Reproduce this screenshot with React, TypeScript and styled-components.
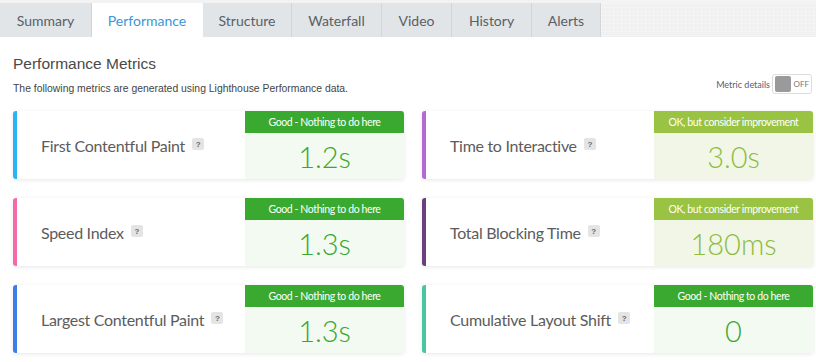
import React from "react";
import styled, { createGlobalStyle } from "styled-components";

const GlobalStyle = createGlobalStyle`
  html, body {
    margin: 0;
    padding: 0;
    background: #ffffff;
  }
  body {
    font-family: Lato, "Open Sans", Arial, sans-serif;
    width: 816px;
    height: 362px;
    overflow: hidden;
  }
`;

const Page = styled.div`
  width: 816px;
  height: 362px;
  background: #ffffff;
`;

const TabBar = styled.nav`
  display: flex;
  height: 37px;
  padding-top: 3px;
  box-sizing: border-box;
  background: #f3f3f3;
`;

const Tab = styled.div<{ $active?: boolean; $w: number }>`
  width: ${({ $w }) => $w}px;
  display: flex;
  align-items: center;
  justify-content: center;
  font-family: Lato, sans-serif;
  font-size: 14px;
  color: ${({ $active }) => ($active ? "#3b97d6" : "#5a5f64")};
  background: ${({ $active }) => ($active ? "#ffffff" : "#e1e5e8")};
  border-right: 1px solid ${({ $active }) => ($active ? "#ffffff" : "#d2d6d9")};
  box-sizing: border-box;
  &:last-of-type {
    border-right: none;
  }
`;

const TabFill = styled.div`
  flex: 1;
  background: #f0f0f0;
  background-image: linear-gradient(#f4f4f4 1px, transparent 1px),
    linear-gradient(90deg, #f4f4f4 1px, transparent 1px);
  background-size: 4px 4px;
`;

const Section = styled.section`
  padding: 18px 3px 0 13px;
`;

const HeaderRow = styled.div`
  display: flex;
  justify-content: space-between;
  align-items: flex-end;
`;

const Title = styled.h2`
  margin: 0;
  font-family: "Liberation Sans", Arial, sans-serif;
  font-weight: normal;
  font-size: 15.5px;
  color: #4a4a4a;
`;

const Sub = styled.p`
  margin: 10px 0 0;
  font-family: "Liberation Sans", Arial, sans-serif;
  font-size: 10.4px;
  color: #444;
`;

const Toggle = styled.div`
  display: flex;
  align-items: center;
  gap: 2px;
  margin-right: 1px;
  font-family: Lato, sans-serif;
  font-size: 9px;
  color: #55607a;
`;

const Switch = styled.div`
  display: flex;
  align-items: center;
  gap: 3px;
  width: 40px;
  height: 20px;
  padding: 2px;
  box-sizing: border-box;
  border: 1px solid #dcdcdc;
  border-radius: 3px;
  color: #777;
  font-size: 8px;
`;

const Knob = styled.span`
  width: 16px;
  height: 16px;
  border-radius: 2px;
  background: #9a9a9a;
`;

const Grid = styled.div`
  display: grid;
  grid-template-columns: 391px 391px;
  column-gap: 18px;
  row-gap: 19px;
  margin-top: 17px;
`;

const Card = styled.div<{ $accent: string }>`
  display: flex;
  height: 68px;
  border-radius: 3px;
  border-left: 4px solid ${({ $accent }) => $accent};
  background: #fff;
  box-shadow: 0 1px 4px rgba(0, 0, 0, 0.1);
  overflow: hidden;
`;

const Label = styled.div`
  flex: 1;
  display: flex;
  align-items: center;
  padding-left: 24px;
  font-family: Lato, sans-serif;
  font-size: 16px;
  letter-spacing: -0.3px;
  color: #5c5c5c;
`;

const Help = styled.span`
  display: inline-flex;
  align-items: center;
  justify-content: center;
  width: 12px;
  height: 12px;
  margin-left: 7px;
  margin-top: -2px;
  border-radius: 2px;
  background: #e4e4e4;
  color: #666;
  font-family: "Liberation Sans", Arial, sans-serif;
  font-weight: bold;
  font-size: 8px;
`;

const Status = styled.div<{ $tone: "good" | "ok" }>`
  width: 159px;
  display: flex;
  flex-direction: column;
  background: ${({ $tone }) => ($tone === "good" ? "#f3faf1" : "#f1f6e7")};
`;

const StatusHead = styled.div<{ $tone: "good" | "ok" }>`
  height: 22px;
  display: flex;
  align-items: center;
  justify-content: center;
  background: ${({ $tone }) => ($tone === "good" ? "#39aa2f" : "#9ac343")};
  color: #fff;
  font-family: Lato, sans-serif;
  font-size: 10.5px;
  letter-spacing: -0.4px;
`;

const Value = styled.div<{ $tone: "good" | "ok" }>`
  flex: 1;
  display: flex;
  align-items: center;
  justify-content: center;
  font-family: Lato, sans-serif;
  font-weight: 300;
  font-size: 29px;
  color: ${({ $tone }) => ($tone === "good" ? "#38a82e" : "#8dbd3f")};
`;

type Metric = {
  name: string;
  accent: string;
  tone: "good" | "ok";
  value: string;
};

const metrics: Metric[] = [
  { name: "First Contentful Paint", accent: "#2ab4f2", tone: "good", value: "1.2s" },
  { name: "Time to Interactive", accent: "#b36ad2", tone: "ok", value: "3.0s" },
  { name: "Speed Index", accent: "#f46aa8", tone: "good", value: "1.3s" },
  { name: "Total Blocking Time", accent: "#6a3f7d", tone: "ok", value: "180ms" },
  { name: "Largest Contentful Paint", accent: "#3a7ee6", tone: "good", value: "1.3s" },
  { name: "Cumulative Layout Shift", accent: "#49c6a1", tone: "good", value: "0" },
];

const tabs = [
  { label: "Summary", w: 92 },
  { label: "Performance", w: 111, active: true },
  { label: "Structure", w: 89 },
  { label: "Waterfall", w: 90 },
  { label: "Video", w: 70 },
  { label: "History", w: 80 },
  { label: "Alerts", w: 69 },
];

const App = () => {
  return (
    <Page>
      <GlobalStyle />
      <TabBar>
        {tabs.map((t) => (
          <Tab key={t.label} $w={t.w} $active={t.active}>
            {t.label}
          </Tab>
        ))}
        <TabFill />
      </TabBar>
      <Section>
        <HeaderRow>
          <div>
            <Title>Performance Metrics</Title>
            <Sub>The following metrics are generated using Lighthouse Performance data.</Sub>
          </div>
          <Toggle>
            Metric details
            <Switch>
              <Knob />
              OFF
            </Switch>
          </Toggle>
        </HeaderRow>
        <Grid>
          {metrics.map((m) => (
            <Card key={m.name} $accent={m.accent}>
              <Label>
                {m.name}
                <Help>?</Help>
              </Label>
              <Status $tone={m.tone}>
                <StatusHead $tone={m.tone}>
                  {m.tone === "good" ? "Good - Nothing to do here" : "OK, but consider improvement"}
                </StatusHead>
                <Value $tone={m.tone}>{m.value}</Value>
              </Status>
            </Card>
          ))}
        </Grid>
      </Section>
    </Page>
  );
};

export default App;
